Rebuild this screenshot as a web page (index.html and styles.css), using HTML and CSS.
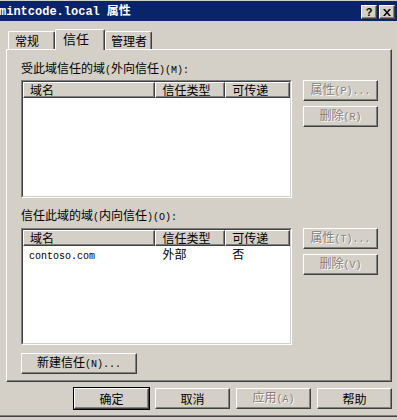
FILE: index.html
```html
<!DOCTYPE html>
<html lang="zh-CN">
  <head>
    <meta charset="UTF-8" />
    <meta name="viewport" content="width=device-width, initial-scale=1.0" />
    <title>mintcode.local 属性</title>
    <link rel="stylesheet" href="styles.css">
  </head>
  <body>
    <div class="window">
      <div class="titlebar">
        <div class="title"><span class="en-title">mintcode.local</span><span class="title-cn">属性</span></div>
        <div class="caption-buttons">
          <button class="cap-btn cap-help">?</button>
          <button class="cap-btn">
            <svg width="8" height="7" viewBox="0 0 8 7">
              <path d="M0 0h2l2 2.5L6 0h2L5 3.5 8 7H6L4 4.5 2 7H0l3-3.5z" fill="#000" />
            </svg>
          </button>
        </div>
      </div>

      <div class="tabs">
        <div class="tab">常规</div>
        <div class="tab active">信任</div>
        <div class="tab">管理者</div>
      </div>

      <div class="panel">
        <div class="label">受此域信任的域<span class="en">(</span>外向信任<span class="en">)(M):</span></div>
        <div class="group">
          <div class="list">
            <div class="list-inner">
              <div class="list-head">
                <div class="col col-name">域名</div>
                <div class="col col-type">信任类型</div>
                <div class="col col-trans">可传递</div>
              </div>
              <div class="list-body"></div>
            </div>
          </div>
          <div class="side-buttons">
            <button class="btn" disabled>属性<span class="en">(P)...</span></button>
            <button class="btn" disabled>删除<span class="en">(R)</span></button>
          </div>
        </div>

        <div class="label label-second">信任此域的域<span class="en">(</span>内向信任<span class="en">)(O):</span></div>
        <div class="group">
          <div class="list list-second">
            <div class="list-inner">
              <div class="list-head">
                <div class="col col-name">域名</div>
                <div class="col col-type">信任类型</div>
                <div class="col col-trans">可传递</div>
              </div>
              <div class="list-body">
                <div class="row">
                  <div class="cell col-name"><span class="en">contoso.com</span></div>
                  <div class="cell col-type">外部</div>
                  <div class="cell col-trans">否</div>
                </div>
              </div>
            </div>
          </div>
          <div class="side-buttons">
            <button class="btn" disabled>属性<span class="en">(T)...</span></button>
            <button class="btn" disabled>删除<span class="en">(V)</span></button>
          </div>
        </div>

        <button class="btn btn-new">新建信任<span class="en">(N)...</span></button>
      </div>

      <div class="footer">
        <button class="btn btn-default">确定</button>
        <button class="btn">取消</button>
        <button class="btn" disabled>应用<span class="en">(A)</span></button>
        <button class="btn">帮助</button>
      </div>
    </div>
  </body>
</html>
```

FILE: styles.css
```css
body {
  margin: 0;
  background-color: #d4d0c8;
  font-family: "Noto Sans CJK SC", sans-serif;
  font-size: 12px;
  line-height: 14px;
  color: #000;
}

.en {
  font-family: "Liberation Mono", monospace;
  font-size: 10px;
}

.window {
  width: 397px;
  height: 417px;
  padding-top: 1px;
  box-sizing: border-box;
  border-bottom: 1px solid #404040;
  box-shadow: inset 0 -1px #808080;
}

/* title bar */
.titlebar {
  height: 20px;
  background-color: #0a246a;
  display: flex;
  align-items: center;
  justify-content: space-between;
  padding-right: 2px;
}

.title {
  color: #fff;
  font-weight: bold;
  margin-left: -1px;
  white-space: nowrap;
}

.en-title {
  font-family: "Liberation Mono", monospace;
  font-size: 12px;
}

.title-cn {
  margin-left: 7px;
}

.caption-buttons {
  display: flex;
  gap: 2px;
  margin-top: 2px;
}

.cap-btn {
  width: 16px;
  height: 14px;
  padding: 0;
  background-color: #d4d0c8;
  border: 1px solid;
  border-color: #fff #404040 #404040 #fff;
  box-shadow: inset -1px -1px #808080;
  display: flex;
  align-items: center;
  justify-content: center;
  font-family: "Liberation Sans", sans-serif;
  font-weight: bold;
  font-size: 11px;
  line-height: 10px;
}

/* tabs */
.tabs {
  height: 28px;
  display: flex;
  align-items: flex-end;
  padding-left: 8px;
}

.tab {
  height: 18px;
  padding: 0 0 0 6px;
  box-sizing: border-box;
  border-top: 1px solid #fff;
  border-left: 1px solid #fff;
  border-right: 1px solid #404040;
  box-shadow: inset -1px 0 #808080;
  border-radius: 2px 2px 0 0;
  line-height: 17px;
  white-space: nowrap;
  flex-shrink: 0;
}

.tab:first-child {
  width: 47px;
}

.tab.active {
  width: 50px;
  height: 21px;
  margin-bottom: -1px;
  padding-left: 7px;
  font-size: 13px;
  background-color: #d4d0c8;
  position: relative;
  z-index: 1;
}

.tab:last-child {
  width: 47px;
  padding-left: 5px;
}

/* tab page */
.panel {
  margin-left: 6px;
  width: 386px;
  height: 333px;
  box-sizing: border-box;
  border: 1px solid;
  border-color: #fff #404040 #404040 #fff;
  box-shadow: inset -1px -1px #808080;
  padding: 11px 0 0 14px;
}

.label {
  margin-bottom: 2px;
}

.label-second {
  margin-top: 10px;
  margin-bottom: 3px;
}

.group {
  display: flex;
  gap: 11px;
}

.list {
  width: 271px;
  height: 118px;
  box-sizing: border-box;
  border: 1px solid;
  border-color: #808080 #fff #fff #808080;
}

.list-second {
  height: 117px;
}

.list-inner {
  height: 100%;
  box-sizing: border-box;
  border: 1px solid;
  border-color: #404040 #d4d0c8 #d4d0c8 #404040;
  background-color: #fff;
  display: flex;
  flex-direction: column;
}

.list-head {
  display: flex;
  height: 16px;
  background-color: #d4d0c8;
}

.col {
  box-sizing: border-box;
  height: 16px;
  padding-left: 6px;
  border-top: 1px solid #fff;
  border-left: 1px solid #fff;
  border-bottom: 1px solid #404040;
  border-right: 1px solid #404040;
  box-shadow: inset -1px -1px #808080;
  line-height: 14px;
}

.col-name {
  width: 133px;
}

.col-type {
  width: 70px;
}

.col-trans {
  width: 65px;
}

.list-body {
  flex: 1;
}

.row {
  display: flex;
  height: 16px;
  line-height: 16px;
}

.cell {
  padding-left: 6px;
  box-sizing: border-box;
}

.cell.col-type,
.cell.col-trans {
  padding-left: 7px;
}

.side-buttons {
  display: flex;
  flex-direction: column;
  gap: 5px;
}

/* push buttons */
.btn {
  width: 75px;
  height: 21px;
  padding: 0;
  box-sizing: border-box;
  background-color: #d4d0c8;
  border: 1px solid;
  border-color: #fff #404040 #404040 #fff;
  box-shadow: inset -1px -1px #808080;
  font-family: inherit;
  font-size: 12px;
  color: #000;
  line-height: 14px;
}

.btn:disabled {
  color: #808080;
  text-shadow: 1px 1px 0 #fff;
}

.btn-new {
  width: 116px;
  margin-top: 8px;
}

.footer {
  display: flex;
  justify-content: flex-end;
  gap: 6px;
  margin-top: 6px;
  padding-right: 5px;
}

.btn-default {
  outline: 1px solid #000;
  outline-offset: 0;
}
```
